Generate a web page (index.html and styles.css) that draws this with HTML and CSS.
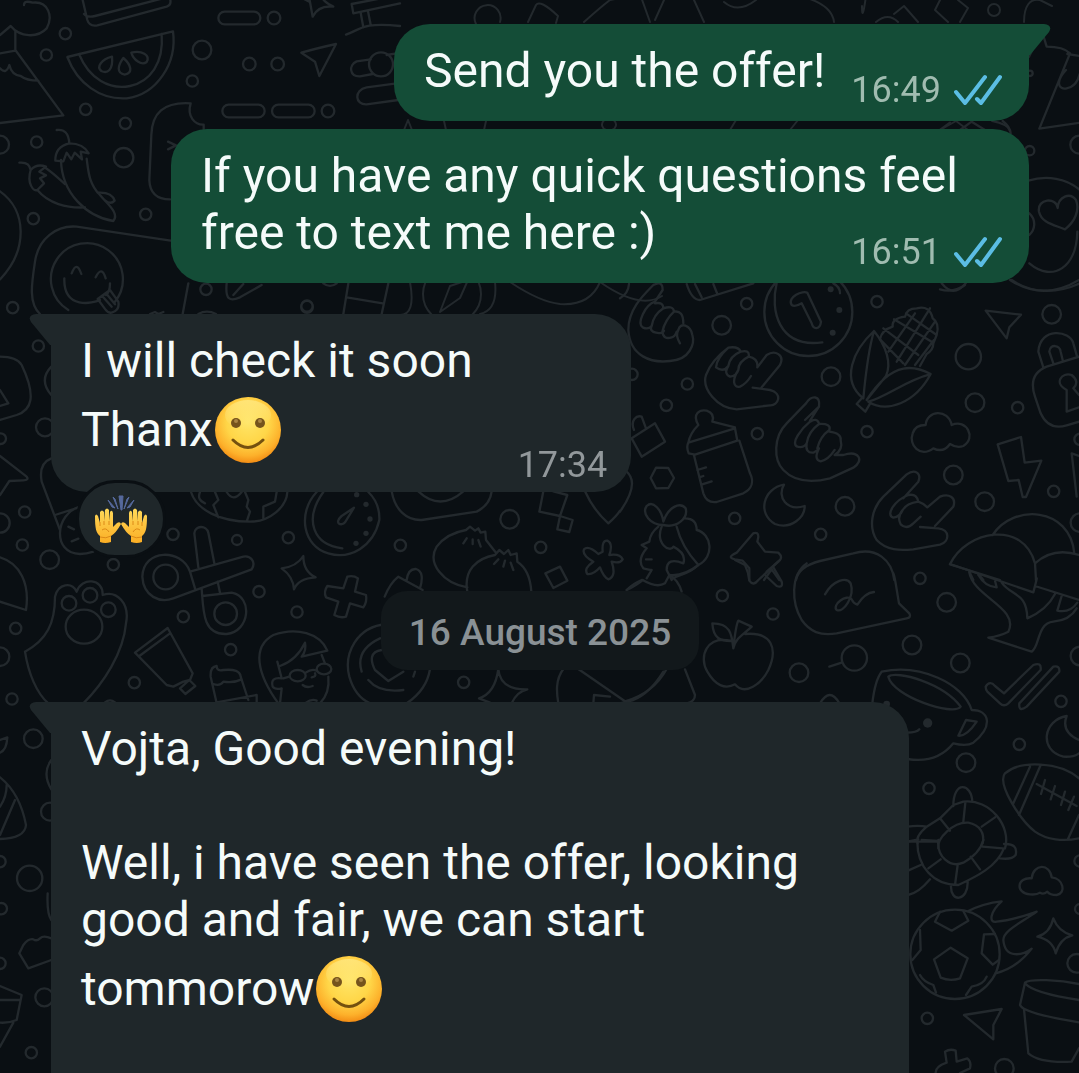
FILE: index.html
```html
<!DOCTYPE html>
<html lang="en">
<head>
  <meta charset="UTF-8" />
  <meta name="viewport" content="width=device-width, initial-scale=1.0"/>
  <title>Chat - Vojta</title>
  <link rel="stylesheet" href="styles.css">
</head>
<body>
  <!-- Doodle wallpaper -->
  <svg class="wallpaper" viewBox="0 0 1079 1073" preserveAspectRatio="xMinYMin slice" aria-hidden="true">
    <!-- top left: melon, pizza, peppers, smiley -->
    <g transform="scale(.33333)">
      <circle cx="196" cy="101" r="17"/><circle cx="139" cy="165" r="17"/><circle cx="577" cy="243" r="17"/>
      <circle cx="257" cy="328" r="17"/><circle cx="376" cy="370" r="17"/><circle cx="110" cy="426" r="17"/>
      <circle cx="100" cy="656" r="17"/><circle cx="437" cy="643" r="17"/><circle cx="618" cy="868" r="17"/>
      <circle cx="38" cy="923" r="17"/><circle cx="921" cy="918" r="17"/><circle cx="822" cy="54" r="19"/>
      <circle cx="748" cy="192" r="19"/><circle cx="833" cy="192" r="19"/><circle cx="984" cy="333" r="19"/>
      <circle cx="606" cy="150" r="28"/><circle cx="371" cy="473" r="29"/><circle cx="0" cy="434" r="27"/>
      <rect x="655" y="35" width="126" height="38" rx="19"/>
      <rect x="667" y="314" width="127" height="38" rx="19"/>
      <rect x="816" y="314" width="128" height="38" rx="19"/>
      <path d="M248 0L262 60Q268 80 292 76L500 20Q514 15 511 0M252 42Q262 54 285 48L508 -10"/>
      <path d="M202 171L519 94C532 190 470 284 380 295C300 300 232 250 202 171ZM237 162C268 238 330 270 390 258C450 245 492 190 485 102"/>
      <path d="M336 170C305 178 288 200 304 213C322 222 340 210 336 170ZM370 174C352 198 350 220 374 224C400 220 394 195 370 174ZM394 158C400 180 425 198 440 186C452 165 425 150 394 158Z"/>
      <path d="M0 105L32 78C60 112 112 115 140 85C160 50 145 2 98 8Q72 0 72 15M46 92V150L190 346L0 369M0 160L46 152M0 205Q18 225 28 195Q35 225 62 228Q80 242 115 242"/>
      <path d="M170 390Q205 385 208 430M166 482Q165 440 208 430Q250 430 266 460L242 455L246 478L224 458L214 478L200 458L190 484ZM183 480C185 580 260 650 340 663C360 640 320 610 300 585C265 550 265 510 260 476"/>
      <path d="M58 488Q88 485 92 510M92 510C80 550 100 575 112 570L132 550L120 535L138 526L118 515L138 500Q110 490 92 510ZM138 505C160 520 175 535 195 552M112 570C145 610 200 625 255 622M293 578Q335 575 344 602Q332 615 316 602"/>
      <path d="M572 310C490 305 456 340 454 405L448 540Q450 598 510 598M572 310C560 350 585 375 611 374V388M504 425L528 436L504 448"/>
      <path d="M0 574C80 630 85 750 0 838M120 942C85 910 95 850 105 785C115 715 170 675 230 680L512 722M565 850L548 942"/>
      <path d="M205 930A108 108 0 1 1 345 905M193 835C190 930 280 910 300 900M330 850C330 870 325 880 318 885M215 820Q230 780 244 822M287 832Q305 795 317 835M293 897L330 870L355 905Q360 930 335 938Q325 940 316 928ZM306 887L335 920M318 880L345 913"/>
      <path d="M928 -5L938 50Q955 15 1000 20Q970 5 965 -10M912 -3L928 5"/>
      <path d="M904 158Q950 145 1008 132L958 228L945 185Z"/>
      <path d="M1200 10L1060 40L1055 12L1180 -12M1082 38L1090 82M1104 34L1112 74M1038 104C1080 90 1085 65 1200 78"/>
      <circle cx="1143" cy="193" r="36"/>
      <path d="M1112 178L1070 184C1045 195 1048 230 1080 229L1118 222M1160 165L1190 160M1190 250L1100 262C1060 270 1065 315 1100 313L1195 300"/>
      <path d="M680 850C675 900 690 905 720 892L785 855M700 885L730 852M450 942L465 936L475 942L490 936M595 942Q620 928 648 942M970 850Q990 865 1010 850M1045 850L1030 942M1165 850L1145 942M1040 892L1148 910"/>
    </g>
    <!-- strip over the first bubbles -->
    <path d="M476 24A13 13 0 1 1 500 22M528 22L536 5Q540 -1 558 16L556 23M584 22Q602 6 610 0L640 -6L650 22M655 20L664 0M694 0L704 22M724 2Q738 14 756 0M800 -4Q832 4 834 22M862 6Q862 24 866 -4M876 22Q888 12 898 22M894 14L904 6L918 22M940 0L935 10L948 22M958 0L968 8L960 22M1024 22C1024 6 1030 -2 1040 0L1052 6"/>
    <circle cx="994" cy="10" r="6"/>
    <path d="M404 130L408 120L412 130M444 121L446 130M486 121L484 130M606 130A7 6 0 1 1 612 130M730 130L736 120M790 130L798 120M940 130L956 121L968 130M992 121Q1008 124 1010 131M600 282Q640 310 662 296"/>
    <path d="M410 282Q416 315 400 315M495 282Q498 310 480 314M510 282Q540 302 560 304Q590 306 600 282"/>
    <circle cx="452" cy="294" r="29"/><path d="M440 312L450 286L468 280L460 298Z"/>
    <circle cx="307" cy="307" r="6"/>
    <!-- upper right edge: cone and heart ring -->
    <g transform="translate(930 50) scale(.33333)">
      <path d="M297 20L335 -60L350 -10Q400 -10 420 10L328 236L450 218M408 60C375 95 385 120 410 115Q440 110 450 70M412 12L450 18"/>
      <circle cx="299" cy="302" r="14"/><circle cx="448" cy="284" r="27"/><circle cx="300" cy="70" r="8"/>
      <path d="M295 392C350 375 410 385 450 420M383 474C380 440 320 445 327 485C335 520 375 525 405 538C435 515 450 480 438 450C420 425 385 440 383 474M298 490C320 510 315 540 298 555M298 640C370 700 440 650 442 545M245 690C310 735 390 728 450 700M30 718Q70 730 105 705M30 240L60 218M90 240L125 215L165 240M218 213Q240 230 242 250"/>
    </g>
    <!-- right middle: hands, corn, bottle, lock, clouds -->
    <g transform="translate(620 280) scale(.33333)">
      <circle cx="380" cy="71" r="17"/><circle cx="771" cy="65" r="17"/><circle cx="305" cy="136" r="28"/>
      <circle cx="633" cy="290" r="28"/><circle cx="202" cy="312" r="17"/><circle cx="139" cy="376" r="17"/>
      <circle cx="412" cy="461" r="17"/><circle cx="741" cy="455" r="17"/><circle cx="1045" cy="230" r="38"/>
      <circle cx="1295" cy="103" r="28"/><circle cx="1065" cy="368" r="28"/><circle cx="1193" cy="383" r="17"/>
      <circle cx="1000" cy="585" r="28"/><circle cx="1094" cy="665" r="28"/><circle cx="675" cy="679" r="28"/>
      <circle cx="602" cy="763" r="17"/><circle cx="344" cy="715" r="17"/><circle cx="1301" cy="634" r="17"/>
      <circle cx="36" cy="283" r="17"/><circle cx="1380" cy="728" r="28"/><circle cx="1380" cy="478" r="17"/>
      <path d="M965 10Q1000 55 1037 10M1170 0Q1270 65 1377 0M200 12Q215 60 240 60L400 10M225 12L245 52M280 12L292 42M0 55Q25 40 27 12"/>
      <path d="M100 15Q128 0 128 30L105 65M100 15C65 50 25 90 25 150C30 230 95 250 150 243C210 240 225 190 217 165C212 135 180 125 175 150Q165 165 180 190"/>
      <path d="M105 65C75 75 50 130 68 142Q85 150 95 138M95 138C82 160 130 165 132 152M105 70Q130 65 130 85Q100 105 95 138M130 85Q160 75 162 95Q135 120 127 155Q130 180 155 172Q165 170 170 155M162 95Q190 90 190 130"/>
      <path d="M425 322L480 255C495 225 465 208 440 225L412 262M398 323L450 330C490 340 475 378 450 376L350 388C290 385 245 325 258 285Q275 240 325 203Q355 198 362 215Q390 208 386 230Q415 235 412 262M325 203Q290 235 288 262Q310 278 325 258Q330 228 362 215M325 258Q310 280 330 290Q350 288 355 270Q355 245 386 230M355 270C335 300 340 325 360 320Q380 310 393 288"/>
      <path d="M555 420L597 380C602 345 575 345 558 370L500 430C460 470 460 540 490 570C530 612 590 605 630 595L700 563C735 540 715 510 670 525L644 525M555 420L597 380L570 422M597 430Q590 412 570 425C545 445 510 490 532 500Q550 505 560 490Q555 520 580 518Q595 510 597 505Q580 540 602 544Q625 540 644 510M560 490Q565 455 597 432Q635 430 628 450Q600 470 592 505M628 455Q665 460 662 480Q670 510 644 525"/>
      <path d="M850 655L895 605C905 580 885 565 860 583L790 650C755 685 745 740 770 780C800 812 840 812 880 808L960 794C990 785 990 748 955 745L900 741M945 738L1000 680C1010 650 985 640 960 650L922 682Q910 670 895 665Q890 640 865 645C825 660 795 705 820 713Q840 710 848 690Q860 670 895 665M848 690Q830 710 842 733Q860 750 880 730L902 710"/>
      <circle cx="565" cy="96" r="132"/>
      <path d="M470 10C450 90 475 205 607 187M515 75C500 50 550 30 562 38L603 125C600 150 580 150 575 130L545 70Q525 82 515 75ZM640 10Q660 20 660 40"/>
      <g class="dots"><circle cx="632" cy="28" r="9"/><circle cx="658" cy="90" r="9"/><circle cx="638" cy="158" r="9"/></g>
      <path d="M762 153C700 210 660 300 730 355C738 270 745 210 762 153C800 200 815 250 798 288L740 360C820 235 890 260 932 282C885 370 800 400 745 365C800 350 860 300 930 283M728 352L710 372L736 395L752 368"/>
      <path d="M780 178Q785 150 818 140Q815 115 855 110Q860 85 890 85Q930 75 938 115Q960 130 950 165L940 190Q940 210 920 222L900 258M780 178L850 250M790 145L895 225M822 118L940 188M858 100L950 165M805 215L885 100M830 245L930 85M855 255L945 125M885 255L942 180"/>
      <path d="M1097 92L1203 104L1168 142L1160 175Z"/>
      <path d="M917 435C920 390 985 385 995 435C1040 415 1070 475 1030 498Q1010 505 990 492Q970 520 940 505C900 535 865 495 878 460Q885 435 917 435Z"/>
      <path d="M1133 493L1203 471L1214 548L1264 542L1218 651H1208L1196 600L1165 603Z"/>
      <path d="M1270 262L1255 215C1260 140 1350 150 1360 190L1372 232M1300 250L1288 215C1290 190 1320 195 1322 215L1328 240M1377 230L1280 260C1230 280 1235 320 1245 350L1262 400C1280 440 1310 445 1340 436L1377 425M1377 382L1340 395L1340 330C1300 310 1325 275 1355 285Q1380 305 1360 325L1377 345M1377 528L1355 520L1370 650"/>
      <path d="M35 475L105 430L135 485L65 530ZM42 450C30 420 50 405 65 410L78 445"/>
      <path d="M108 563L145 564L162 594L145 624L108 625L92 594Z"/>
      <path d="M235 435C215 400 240 388 260 392Q285 400 277 425L345 442M235 435Q210 460 205 488M205 488Q198 500 206 520L225 524L352 482L345 445ZM222 526L250 640Q260 670 290 666L370 640C400 625 400 600 390 580L358 482M232 570L258 562M238 592L250 588M244 614L275 604"/>
      <path d="M492 614C430 625 410 700 465 732C515 750 555 710 554 678C500 695 470 650 492 614Z"/>
      <path d="M130 735C90 735 65 700 80 678C100 660 125 690 130 725C145 680 180 665 197 685C205 715 170 745 130 735ZM195 715Q230 715 230 750C275 760 285 830 235 855C200 890 160 885 155 900M170 740Q185 800 235 855M125 740C105 790 150 820 160 800Q200 820 190 850Q140 830 140 870L155 900M65 795L80 805Q50 840 70 865Q90 870 95 870L80 895M78 838H95M115 740Q90 760 88 785L65 795"/>
      <path d="M400 760Q415 755 415 770L412 785L435 815L475 818Q488 830 480 840L440 875M400 760L350 818C325 830 330 835 345 838L368 842L388 865V900M432 900L455 868L478 900"/>
      <path d="M528 900Q535 860 600 843L700 820C770 800 815 840 823 900"/>
      <path d="M990 853C1040 750 1210 720 1245 850L1248 900M990 853L1140 900M1118 765C1180 670 1350 680 1363 820M1245 850Q1300 800 1377 825M1048 875L1060 900M1075 882L1090 900"/>
      <path d="M20 575Q60 610 0 695"/>
    </g>
    <!-- right lower: bubble, umbrella, cup, turtle, football -->
    <g transform="translate(620 560) scale(.33333)">
      <circle cx="307" cy="107" r="17"/><circle cx="459" cy="162" r="17"/><circle cx="537" cy="338" r="28"/>
      <circle cx="703" cy="294" r="38"/><circle cx="876" cy="255" r="28"/><circle cx="980" cy="127" r="28"/>
      <circle cx="900" cy="55" r="17"/><circle cx="1021" cy="309" r="28"/><circle cx="1323" cy="424" r="17"/>
      <circle cx="1198" cy="553" r="17"/><circle cx="1038" cy="608" r="28"/><circle cx="927" cy="685" r="17"/><circle cx="1380" cy="288" r="28"/>
      <path d="M20 90Q50 75 68 60Q110 85 135 70L148 45Q175 60 185 95M148 45Q190 50 235 15"/>
      <path d="M345 0L375 15Q385 35 388 62Q400 80 415 60L475 5M438 48L470 78Q490 85 485 65L460 22"/>
      <path d="M560 10C510 45 515 130 545 180C570 215 600 228 650 220L860 175Q875 172 868 160L837 130C830 90 825 50 820 40M615 103C640 60 680 50 692 70C705 110 670 160 650 150C635 135 680 100 695 118Q700 130 712 134Q735 98 762 96"/>
      <path d="M990 12L1240 97Q1255 40 1248 60M1245 78L1377 120M1048 38C1060 110 1200 145 1165 215Q1140 228 1105 233L1235 275C1260 260 1250 190 1300 185Q1350 180 1370 145M1075 45Q1095 80 1130 82L1125 62M1145 68C1175 110 1220 95 1222 175Q1280 150 1305 102M1325 108L1312 152Q1350 160 1372 128"/>
      <path d="M340 265C345 220 350 190 355 182L395 200C370 225 345 235 340 265C335 220 330 190 277 190C280 235 300 245 340 243M335 243C260 225 235 290 262 335C285 375 315 390 345 373C375 410 425 370 445 330C475 265 455 215 375 222M665 308L628 320"/>
      <path d="M130 335Q90 400 40 420L0 430M195 328L225 405Q225 425 200 430M600 430Q630 380 658 430"/>
      <path d="M757 430Q765 360 785 335C900 310 1030 370 1055 450C1110 450 1120 500 1060 548Q1040 560 1000 550C960 600 910 605 862 597M805 350C830 330 970 370 1022 440C1000 470 820 410 805 350ZM1038 480L1070 485Q1040 530 1015 527ZM862 518Q890 518 898 508"/>
      <g class="dots"><circle cx="923" cy="489" r="14"/><circle cx="800" cy="432" r="10"/></g>
      <path d="M1097 380Q1110 360 1125 378L1152 400L1240 315Q1265 305 1262 330L1165 430Q1152 442 1140 430L1102 395Q1097 388 1097 380ZM1198 430L1300 320Q1320 315 1318 335L1220 440Q1195 458 1198 430Z"/>
      <path d="M1340 468C1270 480 1255 570 1330 590Q1360 592 1377 580M1340 468Q1322 515 1377 540"/>
      <path d="M1155 640C1200 600 1320 605 1377 655M1155 640C1130 670 1200 780 1245 815C1280 840 1330 845 1377 835M1230 620L1180 730M1262 615L1197 765M1377 765L1345 835M1250 672L1370 738M1275 660L1263 702M1305 678L1292 718M1335 695L1323 735M1362 710L1345 750"/>
      <path d="M1000 738C1000 660 1055 670 1057 725M1030 725L1000 735L960 775L920 800Q885 830 893 850M1030 725C1110 715 1175 800 1155 865M862 800Q895 795 920 800M862 845L895 838M955 865C950 835 1000 785 1045 788C1080 795 1095 820 1088 850M1036 728L1030 785M960 775L990 812M1125 772L1085 800M905 840L955 843"/>
    </g>
    <!-- bottom right: turtle tail, ball, pot -->
    <g transform="translate(880 840) scale(.33333)">
      <circle cx="142" cy="535" r="17"/><circle cx="590" cy="370" r="28"/><circle cx="373" cy="685" r="28"/><circle cx="600" cy="63" r="17"/><circle cx="600" cy="207" r="15"/>
      <path d="M112 0C110 80 160 135 235 135C290 110 350 80 372 25M175 0C170 50 210 85 250 68Q300 40 310 0M90 5H172M84 92L122 75M84 165Q115 160 150 118M145 85L182 58M233 75L225 135M272 50L300 88M308 20L368 25M372 12Q415 10 407 45Q395 60 360 55M213 135C210 190 265 185 263 125"/>
      <path d="M455 115C460 70 510 70 515 112C550 115 560 160 530 165Q510 165 502 155Q490 165 480 158Q470 165 450 163C405 160 410 110 455 115Z"/>
      <circle cx="225" cy="343" r="134"/>
      <path d="M212 323L263 355L240 415Q210 425 182 413L162 358ZM180 215L165 245L215 272L265 242L250 213M357 360L338 374L305 340L312 283L345 282M258 465L275 440Q310 435 320 410M168 458L160 435Q130 425 120 405M97 360L122 330L120 270M265 213Q310 190 365 184C330 215 325 250 350 245C400 240 440 225 470 215C430 245 370 270 370 300C375 360 430 345 455 326Q410 385 347 400"/>
      <path d="M520 235Q535 275 577 286Q540 295 527 340Q518 300 472 290Q510 280 520 235Z"/>
      <path d="M252 525L365 507L340 555V598Z"/>
      <path d="M597 432C540 420 450 415 435 428L420 495Q430 520 597 547M435 430Q460 460 597 480M432 508L445 640Q480 670 575 665L597 625"/>
      <path d="M167 700Q165 680 200 668L195 635Q210 625 227 632L230 665L262 655Q275 665 270 685L240 699"/>
    </g>
    <!-- left middle and scissors, paw, portraits -->
    <g transform="translate(0 300) scale(.33333)">
      <circle cx="115" cy="138" r="17"/><circle cx="135" cy="382" r="27"/><circle cx="2" cy="416" r="16"/>
      <path d="M0 170Q50 170 65 195C110 290 95 330 50 345L0 360M0 270L25 310L0 318M154 200Q115 240 154 285M0 468L80 530Q88 540 70 541L28 543L0 585M154 475Q115 490 125 545L180 690"/>
    </g>
    <g transform="translate(0 480) scale(.33333)">
      <circle cx="74" cy="96" r="17"/><circle cx="67" cy="195" r="17"/><circle cx="149" cy="239" r="28"/>
      <circle cx="0" cy="129" r="29"/><circle cx="340" cy="254" r="17"/><circle cx="519" cy="163" r="17"/>
      <circle cx="711" cy="180" r="15"/><circle cx="865" cy="173" r="17"/><circle cx="777" cy="335" r="17"/>
      <circle cx="891" cy="396" r="17"/><circle cx="550" cy="410" r="17"/><circle cx="692" cy="509" r="17"/>
      <circle cx="403" cy="608" r="17"/><circle cx="36" cy="657" r="17"/><circle cx="47" cy="445" r="17"/><circle cx="0" cy="530" r="28"/>
      <path d="M165 105L250 78M240 80C165 100 155 220 240 222Q260 222 280 215M205 140L222 148M215 184L235 176"/>
      <path d="M0 232C60 250 90 310 78 390L0 365M75 515C140 480 165 430 165 350C175 310 215 305 230 335C245 290 310 295 308 345C350 330 390 370 378 430C370 520 310 610 250 670M75 515C85 580 110 640 145 670"/>
      <circle cx="207" cy="370" r="22"/><circle cx="270" cy="346" r="22"/><circle cx="325" cy="389" r="22"/>
      <ellipse cx="252" cy="440" rx="55" ry="51"/>
      <circle cx="497" cy="291" r="37"/><circle cx="677" cy="401" r="34"/>
      <path d="M570 275C545 205 430 205 427 290C430 350 480 370 520 355L755 268C770 245 750 225 730 230L570 275L585 325M595 262L583 160C585 135 620 135 625 158L643 250M605 325C610 400 610 465 680 462C750 455 760 350 695 338L607 348M653 305L660 338"/>
      <path d="M573 36C590 90 660 125 750 125C810 125 860 80 862 36M600 36Q590 60 615 70M645 36L655 60L640 75L655 112M735 36L745 60L740 80L750 95L740 125M830 36L825 65L790 80V118M680 36Q700 68 725 36"/>
      <path d="M950 36C890 100 910 200 985 220C1050 240 1120 200 1138 120Q1140 70 1105 36M970 36C910 120 940 195 1027 205M1062 83L1025 108C1000 130 1025 140 1035 127Z"/>
      <g class="dots"><circle cx="1070" cy="44" r="8"/><circle cx="1098" cy="73" r="8"/><circle cx="1110" cy="117" r="8"/><circle cx="1098" cy="160" r="8"/><circle cx="1068" cy="190" r="8"/></g>
      <path d="M910 228Q910 275 947 292Q895 295 882 328Q880 290 845 265Q890 260 910 228ZM1030 325L1042 290Q1060 285 1074 295L1065 335L1098 345Q1102 365 1090 382L1050 370L1038 410Q1020 415 1003 405L1015 365L978 352Q970 335 982 318Z"/>
      <path d="M405 518L503 444L578 580L570 600L550 605L520 620L500 615ZM418 528L510 460M540 625L568 600L586 618L556 642ZM650 670L632 590Q630 560 650 558Q650 575 670 570Q720 565 722 590L745 660M640 612Q660 620 670 605Q700 610 725 598M650 667L770 645V670"/>
      <path d="M835 670C770 580 755 500 820 465C890 440 960 460 982 512L905 530Q920 510 915 488Q890 540 840 558M832 545L845 595Q810 590 818 620Q825 630 845 625L840 670M965 525L975 550M985 590Q990 640 960 670M850 595L868 590M917 578Q935 565 950 572M945 580Q950 590 935 592M908 615Q920 625 938 618M918 668Q935 655 950 662"/>
      <ellipse cx="893" cy="587" rx="24" ry="17"/><ellipse cx="972" cy="567" rx="22" ry="16"/>
      <path d="M1160 432C1070 440 1030 520 1048 590Q1065 650 1110 670M1140 475Q1065 510 1085 575M1105 600C1130 630 1170 635 1210 630M1145 510C1110 515 1110 540 1125 570L1165 603L1210 575M315 667Q330 655 345 667"/>
    </g>
    <!-- centre: dumplings, girl, star -->
    <g transform="translate(380 480) scale(.33333)">
      <circle cx="389" cy="118" r="28"/><circle cx="482" cy="202" r="17"/><circle cx="61" cy="196" r="17"/><circle cx="251" cy="607" r="17"/>
      <path d="M35 34C45 90 80 122 125 120L290 95Q330 75 335 34M115 34Q180 95 250 34M490 34L478 95L540 108L562 45L520 34M540 108L532 148L568 156L578 120ZM615 34Q640 90 685 130C700 117 712 105 720 92"/>
      <path d="M262 322C190 310 140 250 170 200Q200 160 258 150L270 140L285 152L295 145L302 158L316 155L318 180L348 218M262 335C250 270 290 235 345 225L358 210L372 222L385 210L392 225L410 220L412 245Q450 270 454 335M260 175L250 190M278 178V192M295 180L302 200M355 238L342 252M375 242L370 260M392 248L400 270"/>
      <path d="M496 280L540 260L562 302L520 324ZM668 215Q665 180 682 182Q700 190 688 225Q720 220 728 238Q720 252 695 245Q710 290 685 298Q670 290 660 262Q640 285 622 282Q610 265 640 245Q605 225 612 208Q625 195 655 222ZM14 350Q30 310 55 290L128 330M80 300Q85 265 108 267Q135 275 120 325M740 330Q760 310 785 300"/>
      <path d="M355 567Q360 630 442 628Q410 635 395 670M355 567Q345 640 297 655L330 668M550 567C525 600 530 640 535 670M595 567L735 664Q820 640 860 567M640 670L642 645L690 650M100 590L105 575M150 567Q140 630 80 670"/>
    </g>
    <!-- lower left edge -->
    <g transform="translate(0 690) scale(.33333)">
      <circle cx="100" cy="146" r="28"/><circle cx="0" cy="515" r="17"/>
      <circle cx="89" cy="565" r="38"/><circle cx="4" cy="656" r="17"/><circle cx="133" cy="922" r="27"/>
      <circle cx="94" cy="1088" r="17"/><circle cx="150" cy="365" r="27"/><circle cx="0" cy="820" r="17"/>
      <path d="M0 150L22 142Q20 180 0 188M0 262Q60 310 78 405Q75 445 0 447M20 285Q20 320 0 350M45 330L0 435M154 210Q125 250 154 298M143 610Q140 670 154 690M154 745Q130 735 120 745Q110 755 100 748Q85 745 70 765L58 790L85 835L154 810M0 888L65 915L50 990Q25 1000 0 998M0 930H60M40 998L0 1070"/>
    </g>
  </svg>

  <!-- Shared emoji and icons -->
  <svg class="sprite" aria-hidden="true">
    <defs>
      <radialGradient id="face" cx=".5" cy=".38" r=".64">
        <stop offset="0" stop-color="#ffe566"/>
        <stop offset=".5" stop-color="#ffd648"/>
        <stop offset=".8" stop-color="#fdb12b"/>
        <stop offset="1" stop-color="#f18610"/>
      </radialGradient>
      <linearGradient id="shine" x1="0" y1="0" x2="0" y2="1">
        <stop offset="0" stop-color="#fff3a6" stop-opacity=".5"/>
        <stop offset="1" stop-color="#fff3a6" stop-opacity="0"/>
      </linearGradient>
      <linearGradient id="skin" x1="0" y1="0" x2="0" y2="1">
        <stop offset="0" stop-color="#ffd95a"/>
        <stop offset="1" stop-color="#fbae24"/>
      </linearGradient>
    </defs>
    <symbol id="smile" viewBox="0 0 66 66">
      <circle cx="33" cy="33" r="33" fill="url(#face)"/>
      <ellipse cx="33" cy="18" rx="23" ry="15" fill="url(#shine)"/>
      <circle cx="21" cy="26" r="5" fill="#75531c"/><circle cx="45" cy="26" r="5" fill="#75531c"/>
      <circle cx="21" cy="24" r="2" fill="#a98543"/><circle cx="45" cy="24" r="2" fill="#a98543"/>
      <path d="M18 43Q33 58 48 43" fill="none" stroke="#74500f" stroke-width="3" stroke-linecap="round"/>
    </symbol>
    <symbol id="hand" viewBox="0 0 27 36">
      <path d="M6 35V29C2 26 1 21 1 9Q2 6 4 9L6 16L6 5Q8 2 10 5V14L11 3Q13 0 15 3V14L16 5Q18 2 19 6V20L23 16Q26 14 27 17Q22 26 17 29V35Q11 37 6 35Z" fill="url(#skin)"/>
      <path d="M6 15V19M10 14V18M15 14V18M6 30Q12 32 17 29M8 23Q12 20 15 25" fill="none" stroke="#dd8a17" stroke-width="1"/>
    </symbol>
    <symbol id="ticks" viewBox="0 0 48 32">
      <path d="M2 18L11 29L31 3M23 25L27 29L46 3" fill="none" stroke="#5bbde4" stroke-width="4" stroke-linejoin="round" stroke-linecap="round"/>
    </symbol>
    <symbol id="tail" viewBox="0 0 22 32">
      <path d="M0 0H15Q24 1 20 8L1 31H0Z"/>
    </symbol>
  </svg>

  <main class="chat">
    <div class="message sent first">
      <svg class="tail"><use href="#tail"/></svg>
      <p class="text">Send you the offer!</p>
      <span class="meta">
        <time>16:49</time>
        <svg class="ticks" role="img" aria-label="Read"><use href="#ticks"/></svg>
      </span>
    </div>

    <div class="message sent stacked">
      <p class="text">If you have any quick questions feel free to text me here :)
        <span class="meta">
          <time>16:51</time>
          <svg class="ticks" role="img" aria-label="Read"><use href="#ticks"/></svg>
        </span>
      </p>
    </div>

    <div class="message received first">
      <svg class="tail"><use href="#tail"/></svg>
      <p class="text">I will check it soon<br>Thanx<svg class="emoji" role="img" aria-label="Smiling face"><use href="#smile"/></svg></p>
      <span class="meta">
        <time>17:34</time>
      </span>
    </div>
    <button class="reaction" aria-label="Raised hands reaction">
      <svg viewBox="0 0 54 50">
        <path d="M25 2H29L28 16H27ZM19 3L24 15L21 5ZM14 6L21 14L18 13ZM35 3L30 15L33 5ZM40 6L33 14L36 13Z" fill="#56699c" stroke="#56699c"/>
        <use href="#hand" x="0" y="13" width="27" height="36"/>
        <use href="#hand" x="0" y="13" width="27" height="36" transform="translate(54 0) scale(-1 1)"/>
      </svg>
    </button>

    <time class="date" datetime="2025-08-16">16 August 2025</time>

    <div class="message received first last">
      <svg class="tail"><use href="#tail"/></svg>
      <p class="text">Vojta, Good evening!<br><br>Well, i have seen the offer, looking good and fair, we can start tommorow<svg class="emoji" role="img" aria-label="Smiling face"><use href="#smile"/></svg></p>
    </div>
  </main>
</body>
</html>
```
FILE: styles.css
```css
* {
  box-sizing: border-box;
}

body {
  font-family: Roboto, sans-serif;
  background: #0a0f13;
  margin: 0;
  color: #f5fbfa;
  min-height: 100vh;
}

.wallpaper {
  position: fixed;
  top: 0;
  left: 0;
  width: 100%;
  height: 100vh;
  fill: none;
  stroke: #23292d;
  stroke-width: 7;
  stroke-linecap: round;
  stroke-linejoin: round;
}

.wallpaper > path,
.wallpaper > circle {
  stroke-width: 2;
}

.dots {
  fill: #23292d;
  stroke: none;
}

.sprite {
  position: absolute;
  width: 0;
  height: 0;
}

.chat {
  position: relative;
  display: flex;
  flex-direction: column;
  align-items: flex-start;
  min-height: 100vh;
  padding: 24px 50px 0 51px;
}

/* Bubbles */
.message {
  position: relative;
  display: flex;
  align-items: flex-end;
  max-width: 858px;
  border-radius: 36px;
}

.sent {
  align-self: flex-end;
  gap: 26px;
  padding: 18px 27px 10px 30px;
  margin-bottom: 8px;
  background: #144d37;
  fill: #144d37;
}

.received {
  gap: 45px;
  padding: 18px 24px 6px 30px;
  background: #1f272a;
  fill: #1f272a;
}

.sent.first {
  border-top-right-radius: 0;
}

.received.first {
  border-top-left-radius: 0;
}

.stacked {
  display: block;
  margin-bottom: 31px;
}

.last {
  flex: 1;
  align-items: flex-start;
  width: 100%;
  padding-bottom: 50px;
  border-radius: 0 36px 0 0;
}

.tail {
  position: absolute;
  top: 0;
  left: 100%;
  width: 22px;
  height: 32px;
}

.received .tail {
  left: auto;
  right: 100%;
  transform: scaleX(-1);
}

.text {
  margin: 0 0 12px;
  font-size: 48px;
  line-height: 57px;
}

.received .text {
  margin-bottom: 16px;
}

.stacked .text {
  display: flow-root;
  margin-bottom: 0;
}

.emoji {
  width: 66px;
  height: 66px;
  margin: 8px 0 7px 2px;
  vertical-align: -24px;
}

.meta {
  display: flex;
  align-items: center;
  gap: 13px;
  font-size: 36px;
  line-height: 42px;
  color: #a0bcb0;
}

.received .meta {
  color: #92989b;
}

/* time shares the last line of a wrapped message */
.stacked .meta {
  float: right;
  margin-top: 27px;
}

.ticks {
  width: 48px;
  height: 32px;
}

/* Reaction under a bubble */
.reaction {
  position: relative;
  display: flex;
  align-items: center;
  justify-content: center;
  width: 90px;
  height: 78px;
  margin: -12px 0 0 25px;
  padding: 0;
  background: #1f272a;
  border: 3px solid #0a0f13;
  border-radius: 39px;
  cursor: pointer;
}

.reaction svg {
  width: 54px;
  height: 50px;
}

.date {
  align-self: center;
  margin: 33px 0 32px;
  padding: 20px 28px 16px;
  background: #12181b;
  border-radius: 26px;
  font-size: 37px;
  font-weight: 500;
  line-height: 43px;
  color: #8a9195;
}
```
